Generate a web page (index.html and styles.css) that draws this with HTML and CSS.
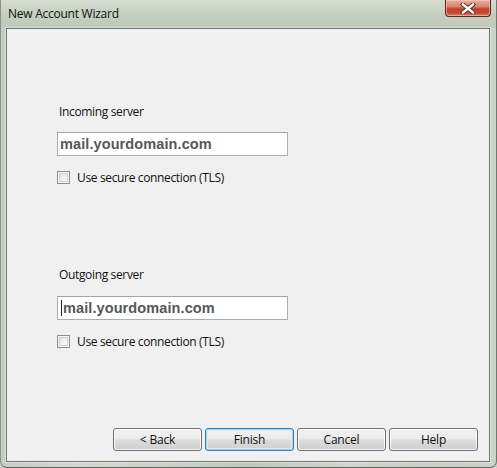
FILE: index.html
```html
<!DOCTYPE html>
<html>
<head>
<meta charset="utf-8">
<title>New Account Wizard</title>
<link rel="stylesheet" href="styles.css">
</head>
<body>
<div class="window">
  <div class="titlebar">
    <span class="title">New Account Wizard</span>
    <div class="close">
      <svg width="16" height="11" viewBox="0 0 16 11">
        <path d="M3 1.5 L13 9.5 M13 1.5 L3 9.5" stroke="#4a2a24" stroke-width="4.2" stroke-linecap="square"/>
        <path d="M3 1.5 L13 9.5 M13 1.5 L3 9.5" stroke="#ffffff" stroke-width="2.4" stroke-linecap="square"/>
      </svg>
    </div>
  </div>
  <div class="panel">
    <div class="form">
      <div class="group first">
        <div class="label">Incoming server</div>
        <div class="input"><span class="value">mail.yourdomain.com</span></div>
        <label class="check"><span class="box"></span><span>Use secure connection (TLS)</span></label>
      </div>
      <div class="group second">
        <div class="label">Outgoing server</div>
        <div class="input focused"><span class="caret"></span><span class="value">mail.yourdomain.com</span></div>
        <label class="check"><span class="box"></span><span>Use secure connection (TLS)</span></label>
      </div>
    </div>
    <div class="buttons">
      <button class="btn">&lt; Back</button>
      <button class="btn default">Finish</button>
      <button class="btn">Cancel</button>
      <button class="btn">Help</button>
    </div>
  </div>
</div>
</body>
</html>
```
FILE: styles.css
```css
html, body {
  margin: 0;
  padding: 0;
  width: 497px;
  height: 468px;
  overflow: hidden;
  background: #c8d0c4;
}

.window {
  box-sizing: border-box;
  width: 497px;
  height: 468px;
  display: flex;
  flex-direction: column;
  border-radius: 0 0 7px 7px;
  border-bottom: 1px solid #5e6660;
  border-left: 1px solid #8a948a;
  border-right: 1px solid #6e7870;
  background: linear-gradient(90deg, #c4cec0 0%, #d2dacd 15%, #c9d2c4 35%, #bfc8bb 50%, #cfd7ca 70%, #c6cfc1 88%, #ccd4c7 100%);
  font-family: "Open Sans", "Noto Sans", "DejaVu Sans", sans-serif;
  color: #000;
}

.titlebar {
  height: 28px;
  display: flex;
  align-items: flex-start;
  justify-content: space-between;
  background: linear-gradient(180deg, #d6ddd2 0%, #c7d0c2 45%, #bfc9ba 100%);
}

.title {
  font-size: 12px;
  line-height: 16px;
  padding: 6px 0 0 7px;
  color: #111;
  letter-spacing: -0.25px;
}

.close {
  width: 46px;
  height: 17px;
  margin-right: 5px;
  box-sizing: border-box;
  border: 1px solid #5a2a22;
  border-top: none;
  border-radius: 0 0 4px 4px;
  background: linear-gradient(180deg, #e8b0a0 0%, #d98470 40%, #c7402a 55%, #c84a34 80%, #dc7a60 100%);
  box-shadow: inset 0 0 0 1px rgba(255,210,200,0.55);
  display: flex;
  align-items: center;
  justify-content: center;
}

.panel {
  flex: 1;
  margin: 0 6px 5px 5px;
  border: 1px solid #6d7870;
  background: #f0f0f0;
  display: flex;
  flex-direction: column;
  padding: 0 11px 10px 50px;
  box-shadow: 0 0 0 1px rgba(255,255,255,0.35);
}

.form {
  display: flex;
  flex-direction: column;
}

.group {
  display: flex;
  flex-direction: column;
  align-items: flex-start;
}

.group.first { margin-top: 75px; }
.group.second { margin-top: 82px; }

.label {
  font-size: 12px;
  line-height: 16px;
  padding-left: 2px;
  color: #111;
  letter-spacing: -0.35px;
}

.input {
  box-sizing: border-box;
  width: 231px;
  height: 24px;
  margin-top: 12px;
  background: #fff;
  border: 1px solid #abadb3;
  border-top-color: #a0a3aa;
  display: flex;
  align-items: center;
  padding-left: 2px;
}

.group.second .input { margin-top: 13px; }

.value {
  font-family: "Liberation Sans", Arial, sans-serif;
  font-weight: bold;
  font-size: 14.5px;
  color: #575757;
  letter-spacing: 0.1px;
}

.caret {
  width: 1px;
  height: 16px;
  background: #222;
  margin-right: 1px;
  margin-left: 1px;
}

.check {
  display: flex;
  align-items: center;
  height: 16px;
  margin-top: 13px;
  font-size: 12px;
  color: #111;
  letter-spacing: -0.35px;
}

.box {
  box-sizing: border-box;
  width: 13px;
  height: 13px;
  border: 1px solid #8f8f8f;
  background: linear-gradient(135deg, #dcdcdc 0%, #f4f4f4 60%, #ffffff 100%);
  box-shadow: inset 0 0 0 1px #f6f6f6, inset 0 0 0 2px #d2d2d2;
  margin-right: 7px;
}

.buttons {
  margin-top: auto;
  display: flex;
  justify-content: flex-end;
  gap: 3px;
}

.btn {
  box-sizing: border-box;
  width: 89px;
  height: 23px;
  border: 1px solid #707070;
  border-radius: 3px;
  background: linear-gradient(180deg, #f2f2f2 0%, #ebebeb 48%, #dddddd 52%, #cfcfcf 100%);
  box-shadow: inset 0 0 0 1px rgba(255,255,255,0.75);
  font-family: "Open Sans", "Noto Sans", "DejaVu Sans", sans-serif;
  font-size: 12px;
  color: #111;
  padding: 0;
  letter-spacing: -0.2px;
}

.btn.default {
  border-color: #3c7fb1;
  background: linear-gradient(180deg, #f2f2f2 0%, #ebebeb 48%, #dddddd 52%, #cfcfcf 100%);
  box-shadow: inset 0 0 0 1px #9fd5f5, inset 0 0 0 2px rgba(220,240,252,0.8);
}
```
